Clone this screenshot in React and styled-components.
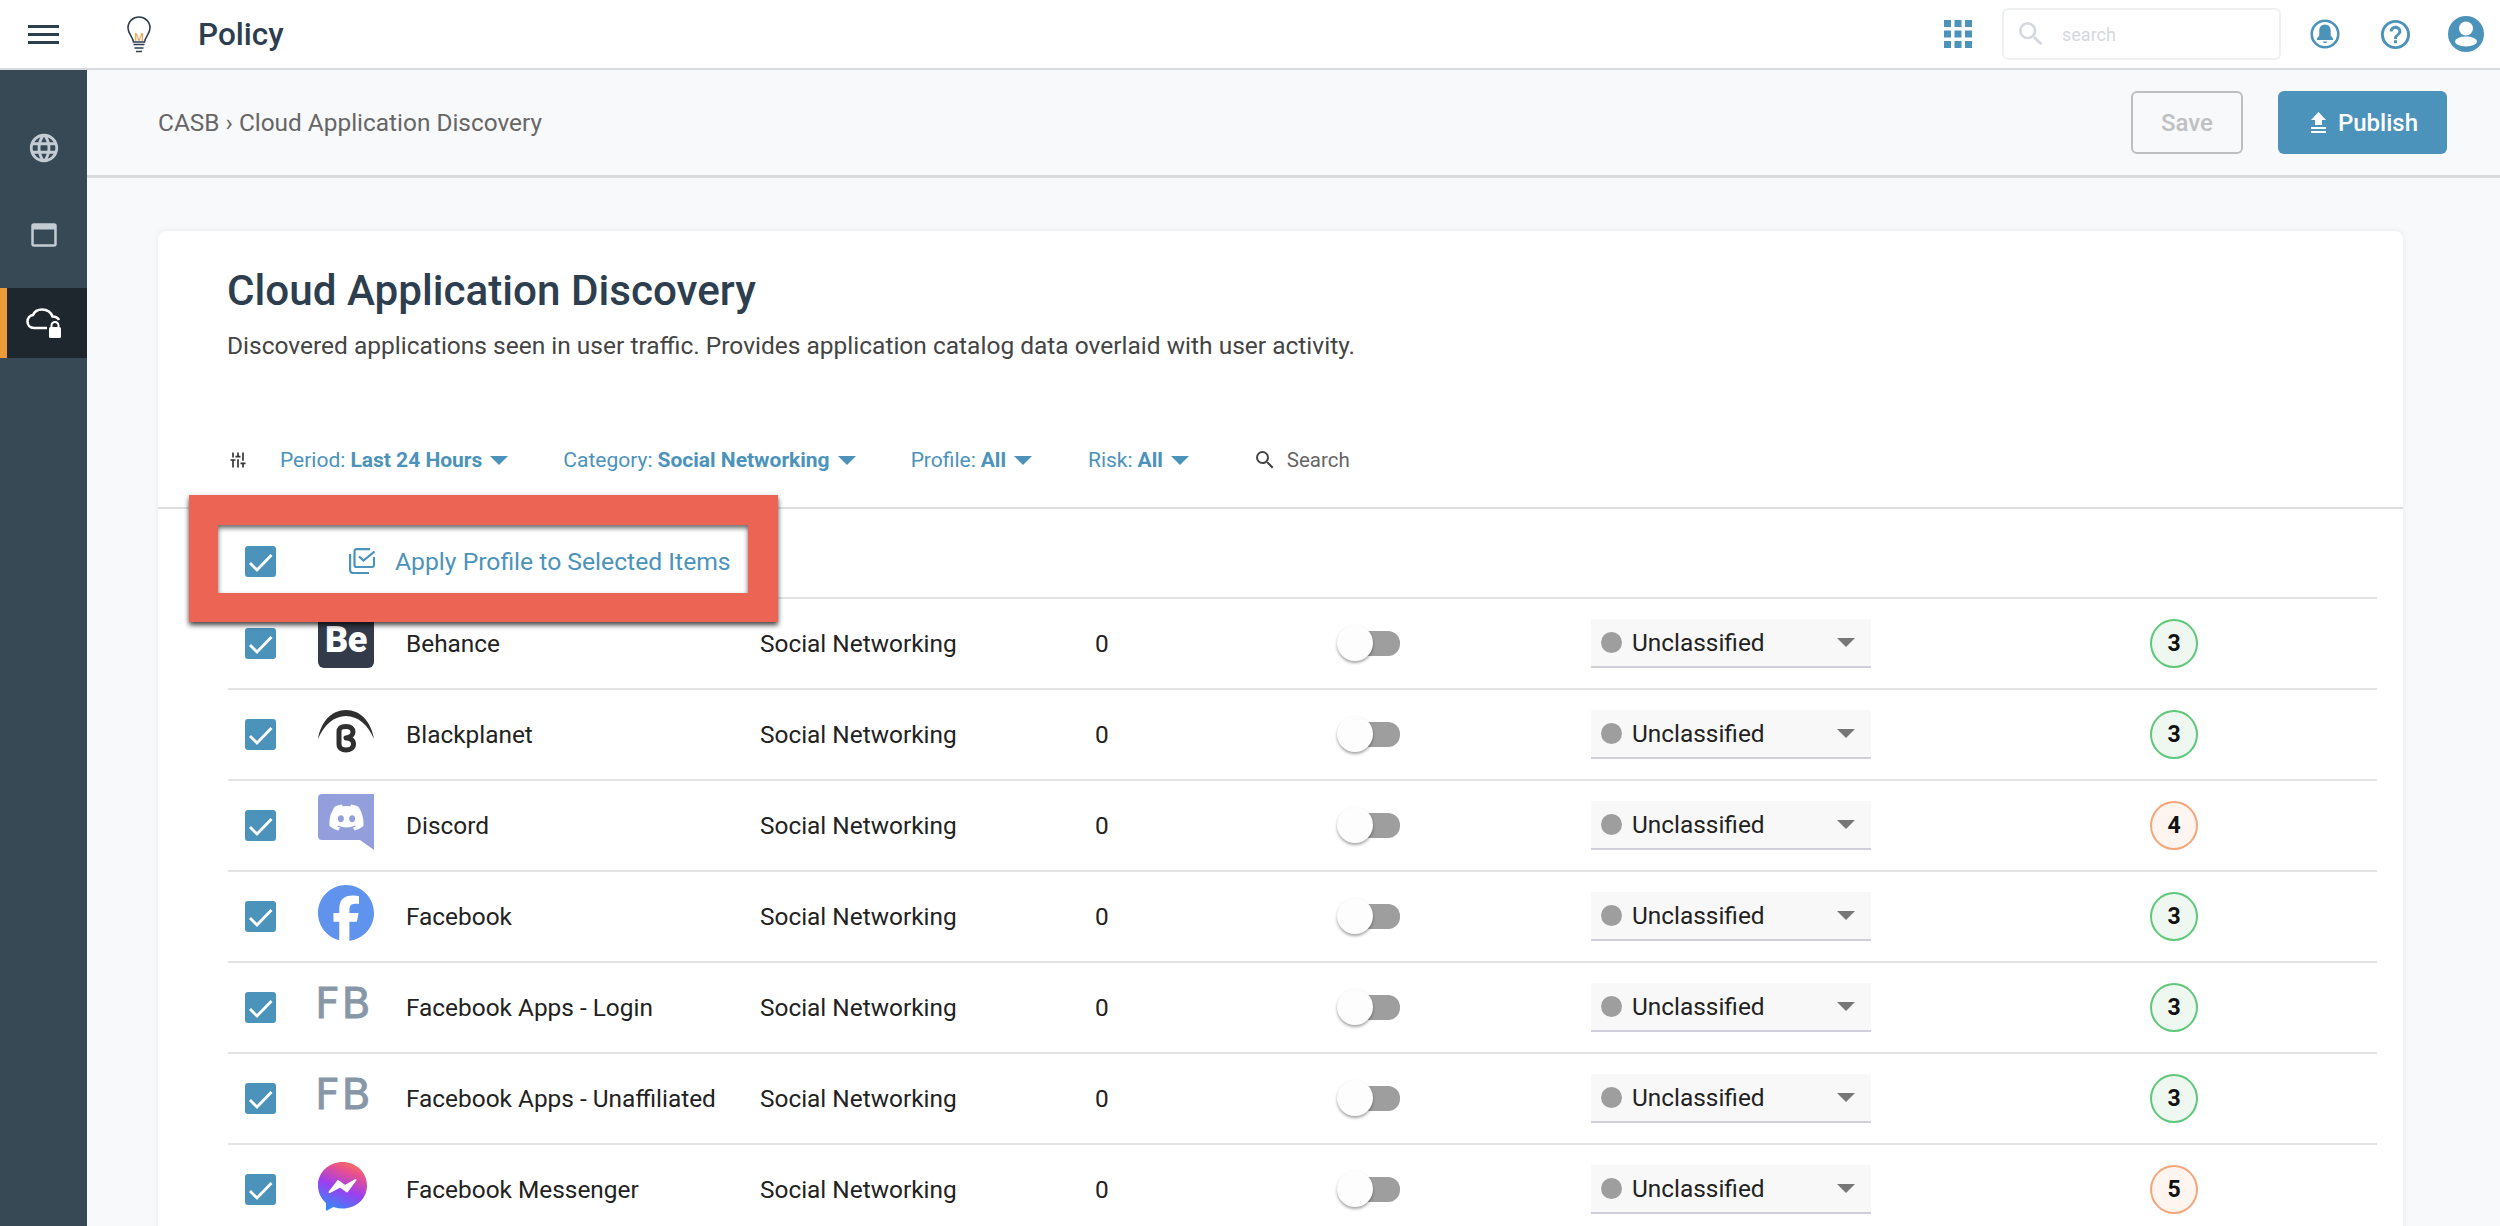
import React from 'react';
import styled, { createGlobalStyle } from 'styled-components';
import { MdLanguage, MdHelpOutline, MdSearch, MdTune } from 'react-icons/md';
import { SiFacebook } from 'react-icons/si';
import { FaDiscord } from 'react-icons/fa';

const BLUE = '#4b93bb';
const NAVY = '#2d3e4f';

const GlobalStyle = createGlobalStyle`
  html, body {
    margin: 0;
    padding: 0;
    background: #f8f9fb;
    font-family: Roboto, "Liberation Sans", sans-serif;
  }
`;

const Page = styled.div`
  display: flex;
  flex-direction: column;
  height: 1226px;
  overflow: hidden;
`;

const TopBar = styled.header`
  display: flex;
  align-items: center;
  flex: none;
  height: 68px;
  background: #fff;
  border-bottom: 2px solid #d8dadf;
`;

const Hamburger = styled.div`
  display: flex;
  flex-direction: column;
  justify-content: space-between;
  width: 31px;
  height: 19px;
  margin: 0 68px 0 28px;

  & > span {
    display: block;
    height: 3px;
    background: ${NAVY};
  }
`;

const AppTitle = styled.div`
  margin-left: 47px;
  font-size: 31.5px;
  font-weight: 500;
  color: ${NAVY};
`;

const TopRight = styled.div`
  display: flex;
  align-items: center;
  margin-left: auto;
  padding-right: 16px;
`;

const SearchBox = styled.div`
  display: flex;
  align-items: center;
  box-sizing: border-box;
  width: 279px;
  height: 52px;
  margin: 0 29px 0 30px;
  padding-left: 11px;
  border: 2px solid #eef0f2;
  border-radius: 6px;
  color: #d5d8de;
  font-size: 18px;

  & > span {
    margin-left: 15px;
  }
`;

const RoundIcon = styled.div`
  display: flex;
  margin-right: ${props => props.$gap}px;
`;

const Body = styled.div`
  display: flex;
  flex: 1;
  min-height: 0;
`;

const Sidebar = styled.nav`
  display: flex;
  flex-direction: column;
  gap: 17px;
  flex: none;
  box-sizing: border-box;
  width: 87px;
  padding-top: 43px;
  background: #384956;
`;

const SideItem = styled.div`
  display: flex;
  align-items: center;
  justify-content: center;
  height: 70px;
  margin-top: ${props => props.$active ? '1px' : '0'};
  color: #c3ccd3;
  background: ${props => props.$active ? '#1e272e' : 'transparent'};
  border-left: ${props => props.$active ? '7px solid #ee9a3a' : '0'};
  padding-right: ${props => props.$active ? '7px' : '0'};
`;

const Main = styled.main`
  flex: 1;
  min-width: 0;
  display: flex;
  flex-direction: column;
`;

const SubBar = styled.div`
  display: flex;
  align-items: center;
  flex: none;
  height: 105px;
  padding: 0 53px 0 71px;
  border-bottom: 3px solid #d8dadd;
  background: #f8f9fb;
`;

const Breadcrumb = styled.div`
  font-size: 24.4px;
  color: #666;
`;

const SaveButton = styled.button`
  box-sizing: border-box;
  width: 112px;
  height: 63px;
  margin-left: auto;
  background: transparent;
  border: 2px solid #bcbec0;
  border-radius: 6px;
  color: #bfc0c2;
  font: 500 24px Roboto, sans-serif;
`;

const PublishButton = styled.button`
  display: flex;
  align-items: center;
  justify-content: center;
  gap: 12px;
  width: 169px;
  height: 63px;
  margin-left: 35px;
  padding: 0 0 0 4px;
  background: ${BLUE};
  border: 0;
  border-radius: 6px;
  color: #fff;
  font: 500 24px Roboto, sans-serif;
`;

const Content = styled.div`
  flex: 1;
  padding: 53px 97px 0 71px;
  background: #f8f9fb;
`;

const Card = styled.section`
  position: relative;
  height: 1100px;
  background: #fff;
  border-radius: 8px;
  box-shadow: 0 0 6px rgba(40, 50, 60, 0.08);
`;

const CardHead = styled.div`
  padding: 36px 70px 0 69px;
`;

const Title = styled.h1`
  margin: 0;
  font-size: 42.2px;
  line-height: 48px;
  font-weight: 500;
  color: ${NAVY};
`;

const Description = styled.p`
  margin: 16px 0 0;
  font-size: 24.5px;
  line-height: 30px;
  color: #444;
`;

const FilterRow = styled.div`
  display: flex;
  align-items: center;
  height: 94px;
  margin: 52px 0 0 1px;
  color: ${BLUE};
  font-size: 21px;
`;

const FilterItem = styled.div`
  display: flex;
  align-items: center;
  margin-right: ${props => props.$gap}px;

  & > b {
    font-weight: 700;
    margin-left: 5px;
  }
`;

const Caret = styled.span`
  width: 0;
  height: 0;
  margin-left: 8px;
  border-left: 9px solid transparent;
  border-right: 9px solid transparent;
  border-top: 9px solid ${props => props.$color || BLUE};
`;

const SearchLabel = styled.div`
  display: flex;
  align-items: center;
  gap: 10px;
  color: #666;
  font-size: 20.5px;
`;

const Divider = styled.div`
  height: 2px;
  background: #dedfe1;
`;

const Table = styled.div`
  padding: 0 26px 0 70px;
`;

const HeadRow = styled.div`
  display: flex;
  align-items: center;
  box-sizing: border-box;
  height: 90px;
  padding: 16px 0 0 17px;
  border-bottom: 2px solid #e3e3e3;
`;

const ApplyLink = styled.div`
  display: flex;
  align-items: center;
  gap: 20px;
  margin-left: 73px;
  color: ${BLUE};
  font-size: 24.7px;
`;

const Row = styled.div`
  display: grid;
  grid-template-columns: 73px 88px 354px 335px 242px 254px 559px 48px;
  align-items: center;
  box-sizing: border-box;
  height: 91px;
  padding-left: 17px;
  border-bottom: 2px solid #e3e3e3;
  font-size: 24.4px;
  color: #222;
`;

const Check = styled.span`
  display: flex;
  align-items: center;
  justify-content: center;
  width: 31px;
  height: 31px;
  background: ${BLUE};
  border-radius: 3px;
`;

const LogoCell = styled.div`
  display: flex;
  align-items: center;
  justify-content: flex-start;
  width: 56px;
  height: 56px;
  margin-top: -7px;
`;

const BehanceLogo = styled.div`
  display: flex;
  align-items: center;
  justify-content: center;
  width: 56px;
  height: 56px;
  background: #333a4a;
  border-radius: 6px;
  color: #fff;
  font-size: 36px;
  font-weight: 900;
  letter-spacing: -0.5px;
`;

const LetterLogo = styled.div`
  width: 56px;
  margin-left: -3px;
  color: #8797a8;
  font-family: "DejaVu Sans", sans-serif;
  font-size: 42.5px;
  line-height: 56px;
  letter-spacing: 2px;
  -webkit-text-stroke: 0.8px #8797a8;
  white-space: nowrap;
`;

const Toggle = styled.div`
  position: relative;
  width: 63px;
  height: 25px;

  &::before {
    content: '';
    position: absolute;
    left: 10px;
    right: 0;
    top: 0;
    bottom: 0;
    background: #9e9e9e;
    border-radius: 0 12px 12px 0;
  }

  &::after {
    content: '';
    position: absolute;
    left: 0;
    top: -6px;
    width: 36px;
    height: 36px;
    background: #fdfdfd;
    border-radius: 50%;
    box-shadow: 0 2px 3px rgba(0, 0, 0, 0.35);
  }
`;

const Select = styled.div`
  display: flex;
  align-items: center;
  box-sizing: border-box;
  width: 280px;
  height: 49px;
  padding: 0 16px 1px 10px;
  background: #f8f8f8;
  border-bottom: 2px solid #d0d0d8;
`;

const StatusDot = styled.span`
  width: 21px;
  height: 21px;
  margin-right: 10px;
  border-radius: 50%;
  background: #9e9e9e;
`;

const SelectCaret = styled(Caret)`
  margin-left: auto;
`;

const RiskBadge = styled.div`
  display: flex;
  align-items: center;
  justify-content: center;
  box-sizing: border-box;
  width: 48px;
  height: 49px;
  border-radius: 50%;
  border: 2px solid ${props => props.$level > 3 ? '#f5a77a' : '#5fc87a'};
  background: ${props => props.$level > 3 ? '#fef5f0' : '#eef8f0'};
  color: #111;
  font-size: 23px;
  font-weight: 700;
`;

const Annotation = styled.div`
  position: absolute;
  left: 31px;
  top: 264px;
  box-sizing: border-box;
  width: 589px;
  height: 127px;
  border-style: solid;
  border-color: #ec6453;
  border-width: 30px 30px 29px 29px;
  box-shadow: 0 3px 5px rgba(0, 0, 0, 0.75), inset 0 3px 5px rgba(0, 0, 0, 0.6);
  z-index: 5;
`;

const CheckMark = () => (
  <svg width="31" height="31" viewBox="0 0 31 31">
    <path d="M5 17l7 7L26.500 9" fill="none" stroke="#fff" strokeWidth="2.800" />
  </svg>
);

const ApplyIcon = () => (
  <svg width="26" height="26" viewBox="0 0 26 26" fill="none" stroke={BLUE} strokeWidth="2.200">
    <path d="M21 1.100H7.500a2 2 0 0 0-2 2V17a2 2 0 0 0 2 2H23a2 2 0 0 0 2-2V9" />
    <path d="M10 8.500l4.500 4L25.500 3.500" />
    <path d="M1.100 6v16a3 3 0 0 0 3 3H20" />
  </svg>
);

const BulbIcon = () => (
  <svg width="24" height="37" viewBox="0 0 24 37">
    <path d="M6.500 26C6 21 1 18 1 12 1 5.500 6 1 12 1s11 4.500 11 11c0 6-5 9-5.500 14z" fill="none" stroke={NAVY} strokeWidth="1.600" />
    <path d="M6.500 28.500h11M7.500 32h9M9 35.500h6" stroke={NAVY} strokeWidth="1.600" fill="none" />
    <text x="12" y="25" textAnchor="middle" fontSize="11" fontFamily="Roboto" fill="#ee9a3a">M</text>
  </svg>
);

const GridIcon = () => (
  <svg width="28" height="28" viewBox="0 0 28 28" fill={BLUE} style={{ display: 'block' }}>
    {[0, 10.5, 21].map(y => [0, 10.5, 21].map(x => <rect key={`${x}-${y}`} x={x} y={y} width="7" height="7" />))}
  </svg>
);

const BellIcon = () => (
  <svg width="30" height="30" viewBox="0 0 30 30">
    <circle cx="15" cy="15" r="13.300" fill="none" stroke={BLUE} strokeWidth="2.600" />
    <path d="M15 5.500c-3.800 0-5.700 2.800-5.700 6.300v4.700L7 19.500V21h16v-1.500l-2.300-3v-4.700c0-3.500-1.900-6.300-5.700-6.300zM13 22.500h4c0 1-1 1.500-2 1.500s-2-.5-2-1.500z" fill={BLUE} />
  </svg>
);

const AvatarIcon = () => (
  <svg width="36" height="36" viewBox="0 0 36 36">
    <circle cx="18" cy="18" r="18" fill={BLUE} />
    <circle cx="18" cy="12.500" r="7" fill="#fff" />
    <ellipse cx="18" cy="25.500" rx="11" ry="5" fill="#fff" />
  </svg>
);

const WindowIcon = () => (
  <svg width="26" height="24" viewBox="0 0 26 24">
    <rect x="1.500" y="1.500" width="23" height="21" rx="1.500" fill="none" stroke="#c3ccd3" strokeWidth="2.500" />
    <rect x="1.500" y="1.500" width="23" height="5" fill="#c3ccd3" />
  </svg>
);

const CloudLockIcon = () => (
  <svg width="36" height="31" viewBox="0 0 36 31">
    <path d="M21 20H8c-4 0-6.500-3-6.500-6.500C1.500 10 4 7.500 7 7c1.500-3.500 5-5.500 9-5.500 5 0 9 3 10.500 7 2.500 0 5.500 1.500 6.500 3.500" fill="none" stroke="#fff" strokeWidth="2.600" />
    <rect x="23" y="19" width="12" height="11" rx="1.500" fill="#fff" />
    <path d="M25.500 19v-1.500a3.500 3.500 0 0 1 7 0V19" fill="none" stroke="#fff" strokeWidth="2" />
  </svg>
);

const UploadIcon = () => (
  <svg width="15" height="21" viewBox="0 0 15 21" fill="#fff">
    <path d="M7.500 0L15 8h-4v5H4V8H0z" />
    <rect y="15" width="15" height="2" />
    <rect y="19" width="15" height="2" />
  </svg>
);

const BlackplanetLogo = () => (
  <svg width="56" height="56" viewBox="0 0 56 56">
    <path d="M0 36C3 18 14 7 28 7s25 11 28 29C50 22 40 13 28 13S6 22 0 36z" fill="#2f2f2f" />
    <path d="M21 29c0-5 3-5.500 7-5.500 5 0 7 2.500 7 5.500s-3 5.500-7 6c4 0 7.500 2 7.500 6s-3.500 6-7.500 6-7-2-7-6z" fill="none" stroke="#2f2f2f" strokeWidth="5" strokeLinejoin="round" />
  </svg>
);

const DiscordLogo = () => (
  <svg width="56" height="56" viewBox="0 0 56 56">
    <path d="M4 0h52v56L42 46H4a4 4 0 0 1-4-4V4a4 4 0 0 1 4-4z" fill="#929fdc" />
    <FaDiscord x="10" y="5" size={37} color="#fff" />
  </svg>
);

const MessengerLogo = () => (
  <svg width="49" height="49" viewBox="0 0 49 49">
    <defs>
      <linearGradient id="messengerFill" x1="0.3" y1="1" x2="0.7" y2="0">
        <stop offset="0" stopColor="#2f8bf8" />
        <stop offset="0.45" stopColor="#9b3ff0" />
        <stop offset="0.8" stopColor="#e8508f" />
        <stop offset="1" stopColor="#f7715c" />
      </linearGradient>
    </defs>
    <path d="M24.500 0C11 0 0 10 0 23.500c0 7 3 13 8 17.500v8l7.500-4c3 1 6 1.500 9 1.500C38 46.500 49 37 49 23.500S38 0 24.500 0z" fill="url(#messengerFill)" />
    <path d="M11.500 30L20 19l7 5 10.500-6L29 29.500l-7-5z" fill="#fff" stroke="#fff" strokeWidth="2" strokeLinejoin="round" />
  </svg>
);

const apps = [
  { name: 'Behance', logo: <BehanceLogo>Be</BehanceLogo>, risk: 3 },
  { name: 'Blackplanet', logo: <BlackplanetLogo />, risk: 3 },
  { name: 'Discord', logo: <DiscordLogo />, risk: 4 },
  { name: 'Facebook', logo: <SiFacebook size={56} color="#5f93ee" />, risk: 3 },
  { name: 'Facebook Apps - Login', logo: <LetterLogo>FB</LetterLogo>, risk: 3 },
  { name: 'Facebook Apps - Unaffiliated', logo: <LetterLogo>FB</LetterLogo>, risk: 3 },
  { name: 'Facebook Messenger', logo: <MessengerLogo />, risk: 5 },
];

const App = () => (
  <Page>
    <GlobalStyle />
    <TopBar>
      <Hamburger><span /><span /><span /></Hamburger>
      <BulbIcon />
      <AppTitle>Policy</AppTitle>
      <TopRight>
        <GridIcon />
        <SearchBox>
          <MdSearch size={32} />
          <span>search</span>
        </SearchBox>
        <RoundIcon $gap={38}><BellIcon /></RoundIcon>
        <RoundIcon $gap={35}><MdHelpOutline size={35} color={BLUE} /></RoundIcon>
        <AvatarIcon />
      </TopRight>
    </TopBar>
    <Body>
      <Sidebar>
        <SideItem><MdLanguage size={34} /></SideItem>
        <SideItem><WindowIcon /></SideItem>
        <SideItem $active><CloudLockIcon /></SideItem>
      </Sidebar>
      <Main>
        <SubBar>
          <Breadcrumb>CASB › Cloud Application Discovery</Breadcrumb>
          <SaveButton>Save</SaveButton>
          <PublishButton><UploadIcon />Publish</PublishButton>
        </SubBar>
        <Content>
          <Card>
            <CardHead>
              <Title>Cloud Application Discovery</Title>
              <Description>Discovered applications seen in user traffic. Provides application catalog data overlaid with user activity.</Description>
              <FilterRow>
                <FilterItem $gap={32}><MdTune size={20} color="#333" style={{ transform: 'rotate(90deg)' }} /></FilterItem>
                <FilterItem $gap={55}>Period:<b>Last 24 Hours</b><Caret /></FilterItem>
                <FilterItem $gap={55}>Category:<b>Social Networking</b><Caret /></FilterItem>
                <FilterItem $gap={56}>Profile:<b>All</b><Caret /></FilterItem>
                <FilterItem $gap={64}>Risk:<b>All</b><Caret /></FilterItem>
                <SearchLabel><MdSearch size={24} color="#444" />Search</SearchLabel>
              </FilterRow>
            </CardHead>
            <Divider />
            <Table>
              <HeadRow>
                <Check><CheckMark /></Check>
                <ApplyLink><ApplyIcon />Apply Profile to Selected Items</ApplyLink>
              </HeadRow>
              {apps.map(app => (
                <Row key={app.name}>
                  <Check><CheckMark /></Check>
                  <LogoCell>{app.logo}</LogoCell>
                  <div>{app.name}</div>
                  <div>Social Networking</div>
                  <div>0</div>
                  <Toggle />
                  <Select>
                    <StatusDot />
                    Unclassified
                    <SelectCaret $color="#777" />
                  </Select>
                  <RiskBadge $level={app.risk}>{app.risk}</RiskBadge>
                </Row>
              ))}
            </Table>
            <Annotation />
          </Card>
        </Content>
      </Main>
    </Body>
  </Page>
);

export default App;
